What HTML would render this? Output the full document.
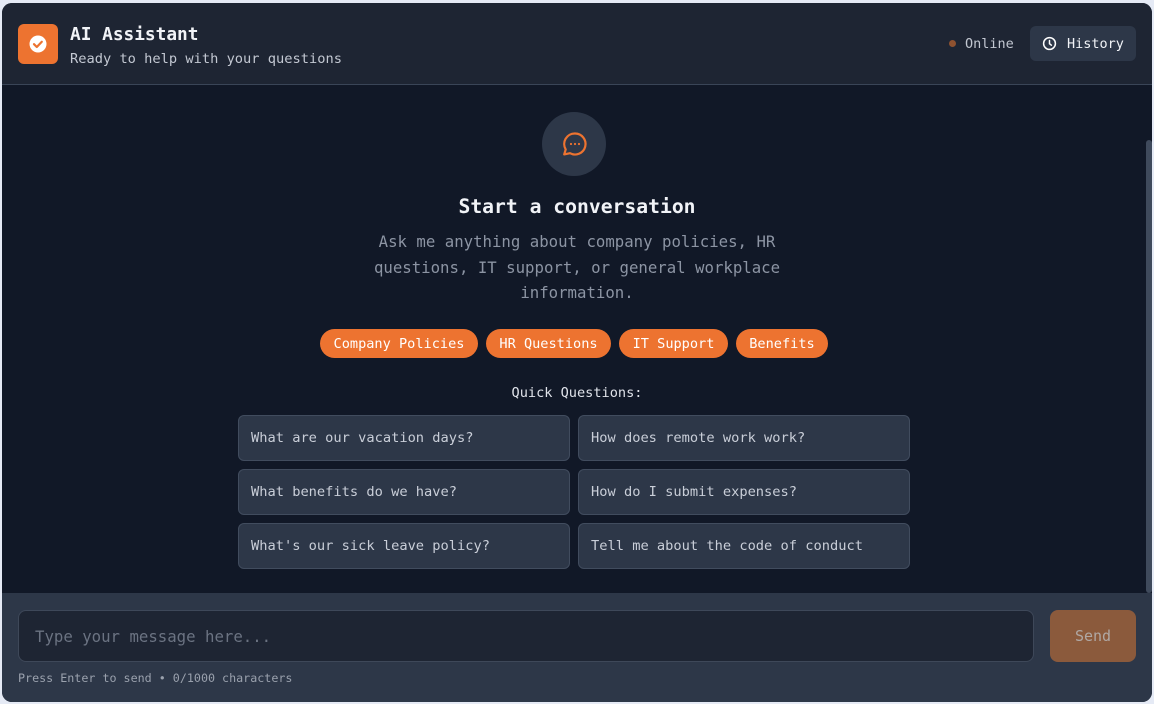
<!DOCTYPE html>
<html><head><meta charset="utf-8"><style>
*{margin:0;padding:0;box-sizing:border-box}
body{width:1154px;height:704px;background:#e5eaf5;font-family:"DejaVu Sans Mono","Liberation Mono",monospace;overflow:hidden;position:relative}
.card{position:absolute;left:2px;top:3px;width:1150px;height:699px;border-radius:10px;overflow:hidden;background:#111827}
.hdr{position:absolute;left:0;top:0;width:1150px;height:82px;background:#1e2533;border-bottom:1px solid #3a4557}
.logo{position:absolute;left:16px;top:21px;width:40px;height:40px;border-radius:6px;background:#ed7330}
.t{position:absolute;color:#f1f3f7;white-space:nowrap}
.ftr{position:absolute;left:0;top:590px;width:1150px;height:109px;background:#2d3748}
.q{position:absolute;width:332px;height:46px;background:#2d3748;border:1px solid #414c5e;border-radius:6px;color:#c9ced8;font-size:13.7px;padding-left:12px;line-height:45px}
.chip{position:absolute;top:326px;height:29px;border-radius:15px;background:#ed7330;color:#fff;font-size:13.6px;line-height:31px;text-align:center}
</style></head><body>
<div class="card">
<div class="hdr">
 <div class="logo"><svg width="40" height="40" viewBox="0 0 40 40"><circle cx="20" cy="20" r="8.5" fill="#fff"/><path d="M16 20.2l2.8 2.8 5-5.2" stroke="#ed7330" stroke-width="2.2" fill="none" stroke-linecap="round" stroke-linejoin="round"/></svg></div>
 <div class="t" style="left:68px;top:21px;font-size:17.8px;font-weight:bold">AI Assistant</div>
 <div class="t" style="left:68px;top:48px;font-size:13.7px;color:#c3c8d2">Ready to help with your questions</div>
 <div style="position:absolute;left:947px;top:37px;width:7px;height:7px;border-radius:50%;background:#8f5230"></div>
 <div class="t" style="left:963px;top:33px;font-size:13.5px;color:#c3c8d2">Online</div>
 <div style="position:absolute;left:1028px;top:23px;width:106px;height:35px;border-radius:6px;background:#2d3748">
  <svg style="position:absolute;left:12px;top:10px" width="15" height="15" viewBox="0 0 16 16"><circle cx="8" cy="8" r="6.3" stroke="#fff" stroke-width="1.6" fill="none"/><path d="M8 4.8V8.3l2 1.5" stroke="#fff" stroke-width="1.6" fill="none" stroke-linecap="round"/></svg>
  <div class="t" style="left:37px;top:10px;font-size:13.5px">History</div>
 </div>
</div>
<div style="position:absolute;left:1144px;top:137px;width:6px;height:453px;background:#3f4a5c;border-radius:3px"></div>
<div style="position:absolute;left:540px;top:109px;width:64px;height:64px;border-radius:50%;background:#2d3748">
 <svg style="position:absolute;left:17px;top:17px" width="30" height="30" viewBox="0 0 30 30"><path d="M16 4.5a10.5 10.5 0 1 1-5 19.7l-5.8 1.2 1.5-5A10.5 10.5 0 0 1 16 4.5z" stroke="#ed7330" stroke-width="2.2" fill="none" stroke-linejoin="round"/><circle cx="12" cy="15" r="1.1" fill="#ed7330"/><circle cx="16" cy="15" r="1.1" fill="#ed7330"/><circle cx="20" cy="15" r="1.1" fill="#ed7330"/></svg>
</div>
<div class="t" style="left:0;width:1150px;text-align:center;top:192px;font-size:19.7px;font-weight:bold">Start a conversation</div>
<div class="t" style="left:0;width:1150px;text-align:center;top:226px;font-size:15.7px;line-height:25.5px;color:#8c94a3;white-space:normal">Ask me anything about company policies, HR<br>questions, IT support, or general workplace<br>information.</div>
<div class="chip" style="left:318px;width:158px">Company Policies</div>
<div class="chip" style="left:484px;width:125px">HR Questions</div>
<div class="chip" style="left:617px;width:109px">IT Support</div>
<div class="chip" style="left:734px;width:92px">Benefits</div>
<div class="t" style="left:0;width:1150px;text-align:center;top:382px;font-size:13.6px;color:#e0e3ea">Quick Questions:</div>
<div class="q" style="left:236px;top:412px">What are our vacation days?</div>
<div class="q" style="left:576px;top:412px">How does remote work work?</div>
<div class="q" style="left:236px;top:466px">What benefits do we have?</div>
<div class="q" style="left:576px;top:466px">How do I submit expenses?</div>
<div class="q" style="left:236px;top:520px">What's our sick leave policy?</div>
<div class="q" style="left:576px;top:520px">Tell me about the code of conduct</div>
<div class="ftr">
 <div style="position:absolute;left:16px;top:17px;width:1016px;height:52px;border-radius:8px;background:#1e2533;border:1px solid #3e4859"></div>
 <div class="t" style="left:33px;top:34px;font-size:15.7px;color:#6b7382">Type your message here...</div>
 <div style="position:absolute;left:1048px;top:17px;width:86px;height:52px;border-radius:8px;background:#8b5a3c;color:#b0a8a4;font-size:15px;text-align:center;line-height:52px">Send</div>
 <div class="t" style="left:16px;top:78px;font-size:11.7px;color:#9aa1ad">Press Enter to send • 0/1000 characters</div>
</div>
</div>
</body></html>
